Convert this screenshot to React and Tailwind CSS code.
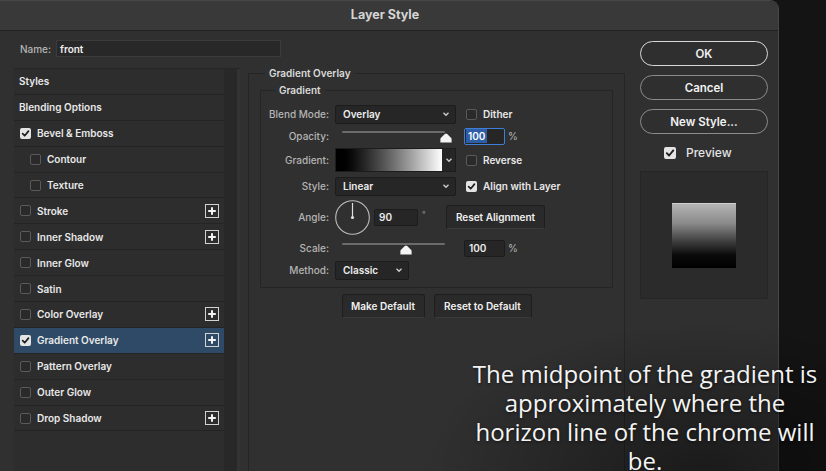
import React from "react";

const Check = ({ checked }) =>
  checked ? (
    <span className="block w-[11px] h-[11px] shrink-0 rounded-[2px] bg-[#e4e4e4] flex items-center justify-center">
      <svg width="9" height="9" viewBox="0 0 10 10">
        <path d="M1.8 5.2 L4.1 7.5 L8.3 2.4" stroke="#1f1f1f" strokeWidth="1.9" fill="none" strokeLinecap="round" strokeLinejoin="round" />
      </svg>
    </span>
  ) : (
    <span className="block w-[11px] h-[11px] shrink-0 rounded-[2px] border border-[#5a5a5a] bg-[#2a2a2a]" />
  );

const Plus = () => (
  <span className="w-[14px] h-[14px] shrink-0 border border-[#d2d2d2] flex items-center justify-center">
    <svg width="10" height="10" viewBox="0 0 10 10">
      <path d="M5 1.2v7.6M1.2 5h7.6" stroke="#f2f2f2" strokeWidth="2" />
    </svg>
  </span>
);

const Chevron = () => (
  <svg width="8" height="6" viewBox="0 0 8 6" className="shrink-0">
    <path d="M1.5 1.8 L4 4.3 L6.5 1.8" stroke="#d0d0d0" strokeWidth="1.3" fill="none" />
  </svg>
);

const Select = ({ value, w }) => (
  <div className={`${w} h-[19px] bg-[#262626] border border-[#1c1c1c] rounded-[2px] flex items-center pl-[7px] pr-[5px] text-[#ececec] font-semibold`}>
    <span className="flex-1">{value}</span>
    <Chevron />
  </div>
);

const Thumb = () => (
  <svg width="12" height="10" viewBox="0 0 12 10">
    <path d="M6 0.5 Q6.6 0.5 7.2 1.1 L11.2 5 Q11.6 5.4 11.6 6 V9.5 H0.4 V6 Q0.4 5.4 0.8 5 L4.8 1.1 Q5.4 0.5 6 0.5 Z" fill="#f4f4f4" />
  </svg>
);

const Slider = ({ pos }) => (
  <div className="w-[121px] h-[20px] relative">
    <div className="ml-[7px] mt-[5px] w-[103px] h-[2px] bg-[#6b6b6b] rounded-full" />
    <div className={`absolute top-[7px] ${pos}`}>
      <Thumb />
    </div>
  </div>
);

const Label = ({ children }) => (
  <span className="w-[68px] mr-[6px] text-right text-[#b4b4b4] font-medium shrink-0">{children}</span>
);

const NumInput = ({ value }) => (
  <div className="w-[41px] h-[17px] bg-[#262626] border border-[#1c1c1c] rounded-[2px] flex items-center pl-[4px] text-[#ececec] font-semibold">
    {value}
  </div>
);

const Btn = ({ w, children }) => (
  <div className={`${w} h-[24px] bg-[#2a2a2a] border border-[#1e1e1e] border-b-[#3a3a3a] rounded-[3px] flex items-center justify-center text-[#f0f0f0] font-semibold`}>
    {children}
  </div>
);

const RoundBtn = ({ children, strong }) => (
  <div
    className={`w-[128px] h-[25px] rounded-full border-[1.5px] ${
      strong ? "border-[#d8d8d8]" : "border-[#8c8c8c]"
    } bg-[#2f2f2f] flex items-center justify-center text-[11.5px] font-semibold text-[#f2f2f2]`}
  >
    {children}
  </div>
);

const items = [
  { label: "Styles", head: true },
  { label: "Blending Options", head: true },
  { label: "Bevel & Emboss", checked: true },
  { label: "Contour", indent: true },
  { label: "Texture", indent: true },
  { label: "Stroke", plus: true },
  { label: "Inner Shadow", plus: true },
  { label: "Inner Glow" },
  { label: "Satin" },
  { label: "Color Overlay", plus: true },
  { label: "Gradient Overlay", checked: true, plus: true, selected: true },
  { label: "Pattern Overlay" },
  { label: "Outer Glow" },
  { label: "Drop Shadow", plus: true },
];

export default function App() {
  return (
    <div className="w-[826px] h-[471px] bg-[#141414] relative overflow-hidden font-['Inter',sans-serif] text-[10px] leading-[14px]">
      <div className="w-[779px] h-[471px] bg-[#303030] rounded-tr-[9px] border-r border-t border-[#474747] flex flex-col">
        {/* title bar */}
        <div className="h-[30px] shrink-0 bg-[#393939] border-b border-[#232323] rounded-tr-[9px] flex items-center justify-center pr-[8px] pb-[1px] text-[12.5px] font-bold text-[#d4d4d4]">
          Layer Style
        </div>
        <div className="flex flex-1">
          {/* left area */}
          <div className="w-[626px] pl-[14px] flex flex-col">
            <div className="mt-[9px] h-[17px] flex items-center pl-[6px]">
              <span className="text-[#b4b4b4] font-medium w-[36px]">Name:</span>
              <div className="w-[225px] h-[17px] bg-[#282828] border border-[#3b3b3b] flex items-center pl-[3px] text-[#efefef] font-semibold">
                front
              </div>
            </div>
            <div className="mt-[9px] flex items-start">
              {/* list */}
              <div className="mt-[2px] w-[226px] h-[420px] flex border-t border-[#262626]">
                <div className="w-[210px] bg-[#2d2d2d] flex flex-col">
                  {items.map((it) => (
                    <div
                      key={it.label}
                      className={`h-[25.9px] shrink-0 border-b border-[#242424] flex items-center pr-[5px] ${
                        it.selected ? "bg-[#2e4a66]" : ""
                      } ${it.head ? "pl-[5px]" : it.indent ? "pl-[16px]" : "pl-[6px]"}`}
                    >
                      {!it.head && <Check checked={it.checked} />}
                      <span className={`text-[#e8e8e8] font-semibold ${it.head ? "" : "ml-[6px]"}`}>{it.label}</span>
                      {it.plus && (
                        <span className="ml-auto">
                          <Plus />
                        </span>
                      )}
                    </div>
                  ))}
                </div>
                <div className="w-[16px] bg-[#282828] border-r-[3px] border-[#333333]" />
              </div>
              {/* outer fieldset */}
              <fieldset className="ml-[8px] w-[377px] h-[420px] border border-[#252525] px-[11px]">
                <legend className="ml-[5px] px-[4px] text-[#dadada] font-semibold leading-[14px]">Gradient Overlay</legend>
                <fieldset className="mt-[3px] border border-[#252525] pb-[7px]">
                  <legend className="ml-[14px] px-[4px] text-[#dadada] font-semibold leading-[14px]">Gradient</legend>
                  <div className="mt-[7px] flex flex-col">
                    {/* blend mode */}
                    <div className="h-[20px] flex items-center">
                      <Label>Blend Mode:</Label>
                      <Select value="Overlay" w="w-[121px]" />
                      <span className="ml-[10px]"><Check /></span>
                      <span className="ml-[6px] text-[#e8e8e8] font-semibold">Dither</span>
                    </div>
                    {/* opacity */}
                    <div className="mt-[2px] h-[20px] flex items-center">
                      <Label>Opacity:</Label>
                      <Slider pos="left-[105px]" />
                      <div className="ml-[8px] w-[41px] h-[17px] bg-[#262626] border border-[#3f7ed6] rounded-[2px] flex items-center pl-[1px] text-white font-semibold">
                        <span className="bg-[#2d5ea6] px-[2px]">100</span>
                      </div>
                      <span className="ml-[3px] text-[#b4b4b4]">%</span>
                    </div>
                    {/* gradient */}
                    <div className="mt-[2px] h-[24px] flex items-center">
                      <Label>Gradient:</Label>
                      <div className="w-[121px] h-[24px] bg-[#262626] border border-[#1c1c1c] flex items-center">
                        <div className="w-[106px] h-[22px] bg-gradient-to-r from-black to-white" />
                        <div className="flex-1 flex justify-center">
                          <Chevron />
                        </div>
                      </div>
                      <span className="ml-[10px]"><Check /></span>
                      <span className="ml-[6px] text-[#e8e8e8] font-semibold">Reverse</span>
                    </div>
                    {/* style */}
                    <div className="mt-[4px] h-[20px] flex items-center">
                      <Label>Style:</Label>
                      <Select value="Linear" w="w-[121px]" />
                      <span className="ml-[10px]"><Check checked /></span>
                      <span className="ml-[6px] text-[#e8e8e8] font-semibold">Align with Layer</span>
                    </div>
                    {/* angle */}
                    <div className="mt-[2px] h-[38px] flex items-center">
                      <Label>Angle:</Label>
                      <svg width="35" height="35" viewBox="0 0 35 35" className="shrink-0">
                        <circle cx="17.5" cy="17.5" r="16.8" stroke="#bdbdbd" strokeWidth="1.1" fill="none" />
                        <path d="M17.5 17.5 V3" stroke="#e0e0e0" strokeWidth="1.2" />
                        <circle cx="17.5" cy="17.5" r="1.6" fill="#e0e0e0" />
                      </svg>
                      <div className="ml-[4px] w-[44px] h-[17px] bg-[#262626] border border-[#1c1c1c] rounded-[2px] flex items-center pl-[4px] text-[#ececec] font-semibold">
                        90
                      </div>
                      <span className="ml-[4px] w-[6px] text-[8px] text-[#9a9a9a] self-start mt-[9px]">°</span>
                      <div className="ml-[18px]">
                        <Btn w="w-[99px]">Reset Alignment</Btn>
                      </div>
                    </div>
                    {/* scale */}
                    <div className="mt-[2px] h-[20px] flex items-center">
                      <Label>Scale:</Label>
                      <Slider pos="left-[65px]" />
                      <div className="ml-[8px]">
                        <NumInput value="100" />
                      </div>
                      <span className="ml-[3px] text-[#b4b4b4]">%</span>
                    </div>
                    {/* method */}
                    <div className="mt-[2px] h-[20px] flex items-center">
                      <Label>Method:</Label>
                      <Select value="Classic" w="w-[74px]" />
                    </div>
                  </div>
                </fieldset>
                <div className="mt-[6px] flex justify-center gap-[9px]">
                  <Btn w="w-[83px]">Make Default</Btn>
                  <Btn w="w-[98px]">Reset to Default</Btn>
                </div>
              </fieldset>
            </div>
          </div>
          {/* right column */}
          <div className="w-[152px] pl-[14px] pt-[10px] flex flex-col">
            <div className="flex flex-col gap-[9px]">
              <RoundBtn strong>OK</RoundBtn>
              <RoundBtn>Cancel</RoundBtn>
              <RoundBtn>New Style...</RoundBtn>
            </div>
            <div className="mt-[8px] h-[22px] flex items-center pl-[24px]">
              <span className="w-[12px] h-[12px] rounded-[2px] bg-[#e4e4e4] flex items-center justify-center">
                <svg width="10" height="10" viewBox="0 0 10 10">
                  <path d="M1.8 5.2 L4.1 7.5 L8.3 2.4" stroke="#1f1f1f" strokeWidth="1.9" fill="none" strokeLinecap="round" strokeLinejoin="round" />
                </svg>
              </span>
              <span className="ml-[10px] text-[12px] font-medium text-[#e4e4e4]">Preview</span>
            </div>
            <div className="mt-[7px] w-[128px] h-[128px] bg-[#2b2b2b] border border-[#262626] flex items-center justify-center">
              <div className="w-[64px] h-[65px] border-t border-[#d0d0d0] bg-[linear-gradient(to_bottom,#b4b4b4_0%,#8a8a8a_30%,#3a3a3a_60%,#0a0a0a_80%,#000_100%)]" />
            </div>
          </div>
        </div>
      </div>

      {/* vignette behind caption */}
      <div className="absolute left-[420px] top-[320px] w-[406px] h-[151px] bg-[radial-gradient(ellipse_at_70%_100%,rgba(0,0,0,0.45),transparent_70%)]" />
      {/* caption overlay */}
      <div className="absolute left-[445px] top-[359px] w-[400px] text-center text-[24px] leading-[29px] text-[#f4f4f4] font-['Open_Sans',sans-serif] whitespace-nowrap [text-shadow:0_1px_3px_rgba(0,0,0,0.6)]">
        The midpoint of the gradient is
        <br />
        approximately where the
        <br />
        horizon line of the chrome will
        <br />
        be.
      </div>
    </div>
  );
}
